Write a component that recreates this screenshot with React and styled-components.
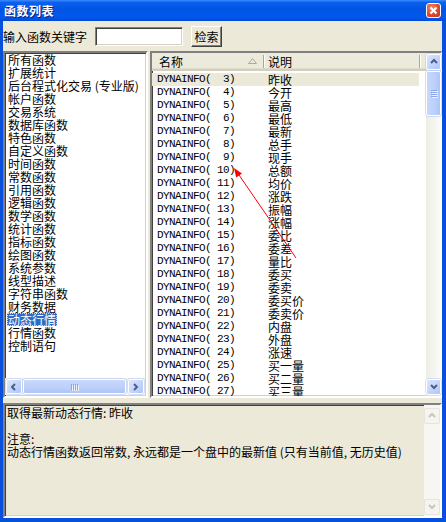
import React from 'react';
import styled, { createGlobalStyle } from 'styled-components';

const GlobalStyle = createGlobalStyle`
  html, body { margin: 0; padding: 0; background: #0055e5; }
  body {
    font-family: "Noto Sans CJK SC", "Liberation Sans", sans-serif;
    font-size: 12px;
    color: #000;
  }
`;

const Window = styled.div`
  position: relative;
  width: 446px;
  height: 522px;
  background: #0850dc;
  display: flex;
  flex-direction: column;
  overflow: hidden;
`;

const TitleBar = styled.div`
  height: 21px;
  flex: none;
  display: flex;
  align-items: center;
  padding: 0 5px 0 4px;
  background: linear-gradient(#3b8cf8 0, #0a5ff0 12%, #0055e5 45%, #0058ea 85%, #0048d4 100%);
`;

const Title = styled.span`
  color: #fff;
  font-weight: bold;
  font-size: 12px;
  letter-spacing: 0.5px;
  text-shadow: 1px 1px #0a1e8a;
`;

const CloseButton = styled.div`
  margin-left: auto;
  width: 15px;
  height: 15px;
  box-sizing: border-box;
  border: 1px solid #fff;
  border-radius: 3px;
  background: radial-gradient(circle at 35% 30%, #f08a6a, #d9452a 60%, #c23a1e);
  display: flex;
  align-items: center;
  justify-content: center;
`;

const Client = styled.div`
  flex: 1;
  margin: 0 4px 4px 3px;
  background: #ece9d8;
  display: flex;
  flex-direction: column;
`;

const SearchRow = styled.div`
  height: 30px;
  flex: none;
  display: flex;
  align-items: center;
  gap: 8px;
`;

const Label = styled.span`
  line-height: 13px;
  white-space: nowrap;
`;

const SearchInput = styled.input`
  width: 88px;
  height: 19px;
  box-sizing: border-box;
  margin: 1px 0 0;
  padding: 0 2px;
  background: #fff;
  border: 1px solid;
  border-color: #808080 #fff #fff #808080;
  box-shadow: inset 1px 1px #404040, inset -1px -1px #d4d0c8;
  outline: none;
`;

const Button = styled.button`
  width: 31px;
  height: 21px;
  padding: 0;
  font: inherit;
  font-size: 12px;
  line-height: 13px;
  background: #ece9d8;
  border: 1px solid;
  border-color: #fff #404040 #404040 #fff;
  box-shadow: inset -1px -1px #808080;
`;

const Main = styled.div`
  height: 347px;
  flex: none;
  display: flex;
  gap: 2px;
`;

const Sunken = styled.div`
  box-sizing: border-box;
  border: 2px solid;
  border-color: #808080 #fff #fff #808080;
  box-shadow: inset 1px 1px #404040, inset -1px -1px #d4d0c8;
`;

const LeftList = styled(Sunken)`
  width: 145px;
  flex: none;
  background: #fff;
  display: flex;
  flex-direction: column;
  padding: 0 1px 1px 0;
`;

const Items = styled.div`
  flex: 1;
  display: flex;
  flex-direction: column;
  align-items: flex-start;
  padding-left: 2px;
  overflow: hidden;
`;

const Item = styled.div`
  height: 13px;
  line-height: 13px;
  padding: 0 1px;
  white-space: pre;
  background: ${p => (p.$selected ? '#316ac5' : 'transparent')};
  color: ${p => (p.$selected ? '#fff' : '#000')};
  outline: ${p => (p.$selected ? '1px dotted #e8d890' : 'none')};
  outline-offset: -1px;
`;

const HScroll = styled.div`
  height: 16px;
  flex: none;
  display: flex;
  align-items: stretch;
  gap: 1px;
  padding: 1px 1px 0;
  background: linear-gradient(#eeede5, #fbfbf8);
`;

const VScroll = styled.div`
  width: ${p => p.$w || 15}px;
  flex: none;
  display: flex;
  flex-direction: column;
  gap: 1px;
  padding: ${p => p.$pad || '1px 0'};
  box-sizing: border-box;
  background: ${p => (p.$disabled ? '#f7f6f2' : 'linear-gradient(90deg, #eeede5, #fbfbf8)')};
`;

const ScrollBtn = styled.div`
  flex: none;
  width: ${p => p.$w}px;
  height: ${p => p.$h}px;
  box-sizing: border-box;
  border-radius: 2px;
  border: 1px solid ${p => (p.$disabled ? '#e6e4dc' : '#fff')};
  background: ${p =>
    p.$disabled
      ? '#f5f4ef'
      : 'linear-gradient(135deg, #dbe6fe 0%, #c3d4fc 55%, #afc5f6 100%)'};
  box-shadow: ${p => (p.$disabled ? 'none' : '0 0 0 0.5px #b2c6f3')};
  display: flex;
  align-items: center;
  justify-content: center;
`;

const Thumb = styled.div`
  flex: none;
  width: ${p => p.$w}px;
  height: ${p => p.$h}px;
  box-sizing: border-box;
  border-radius: 2px;
  border: 1px solid #fff;
  box-shadow: 0 0 0 0.5px #a9bff0;
  background: ${p =>
    p.$vertical
      ? 'linear-gradient(90deg, #c9d8fc, #bcd0fb 60%, #aec4f5)'
      : 'linear-gradient(#c9d8fc, #bcd0fb 60%, #aec4f5)'};
  display: flex;
  align-items: center;
  justify-content: center;
`;

const Grip = styled.div`
  display: flex;
  flex-direction: ${p => (p.$vertical ? 'column' : 'row')};
  gap: 1px;
`;

const GripLine = styled.div`
  width: ${p => (p.$vertical ? '6px' : '1px')};
  height: ${p => (p.$vertical ? '1px' : '6px')};
  background: #8aa5e8;
  box-shadow: 1px 1px #eef3fe;
`;

const RightList = styled(Sunken)`
  flex: 1;
  background: #fff;
  display: flex;
  border-right-width: 1px;
`;

const ListBody = styled.div`
  flex: 1;
  display: flex;
  flex-direction: column;
  overflow: hidden;
`;

const Header = styled.div`
  height: 18px;
  flex: none;
  display: flex;
  align-items: center;
  box-sizing: border-box;
  background: #ebeadb;
  border-bottom: 2px solid #d2cfbf;
  box-shadow: inset 0 -1px #dedbcb;
`;

const HeaderCell = styled.div`
  width: ${p => p.$w}px;
  flex: none;
  box-sizing: border-box;
  padding: 0 6px 0 ${p => p.$pl}px;
  display: flex;
  align-items: center;
  justify-content: space-between;
  line-height: 13px;
`;

const Divider = styled.div`
  width: 1px;
  height: 13px;
  flex: none;
  background: #aca899;
  border-right: 1px solid #fff;
`;

const Rows = styled.div`
  flex: 1;
  padding-top: 2px;
  overflow: hidden;
`;

const Row = styled.div`
  width: 267px;
  height: 13px;
  display: flex;
  line-height: 13px;
  background: ${p => (p.$selected ? '#ece9d8' : 'transparent')};
`;

const NameCell = styled.div`
  width: 112px;
  flex: none;
  box-sizing: border-box;
  padding-left: 5px;
  font-family: "Liberation Mono", monospace;
  font-size: 11px;
  letter-spacing: -0.6px;
  white-space: pre;
`;

const DescCell = styled.div`
  flex: 1;
  padding-left: 4px;
  white-space: nowrap;
`;

const Info = styled(Sunken)`
  flex: 1;
  margin-top: 5px;
  display: flex;
  background: #ece9d8;
`;

const InfoText = styled.div`
  flex: 1;
  padding: 1px 2px;
  line-height: 13px;
  white-space: pre-wrap;
`;

const Spacer = styled.div`
  flex: 1;
`;

const Overlay = styled.svg`
  position: absolute;
  left: 0;
  top: 0;
  pointer-events: none;
`;

const arrowPoints = {
  up: '1,5 4,2 7,5',
  down: '1,2 4,5 7,2',
  left: '5,1 2,4 5,7',
  right: '2,1 5,4 2,7',
};

const Arrow = ({ dir, disabled }) => (
  <svg width="8" height="8" viewBox="0 0 8 8">
    <polyline
      points={arrowPoints[dir]}
      fill="none"
      stroke={disabled ? '#c9c7ba' : '#4d6185'}
      strokeWidth="2"
    />
  </svg>
);

const GripMarks = ({ vertical }) => (
  <Grip $vertical={vertical}>
    {[0, 1, 2, 3].map(i => (
      <GripLine key={i} $vertical={vertical} />
    ))}
  </Grip>
);

const categories = [
  '所有函数', '扩展统计', '后台程式化交易 (专业版)', '帐户函数', '交易系统',
  '数据库函数', '特色函数', '自定义函数', '时间函数', '常数函数', '引用函数',
  '逻辑函数', '数学函数', '统计函数', '指标函数', '绘图函数', '系统参数',
  '线型描述', '字符串函数', '财务数据', '动态行情', '行情函数', '控制语句',
];

const descs = [
  '昨收', '今开', '最高', '最低', '最新', '总手', '现手', '总额', '均价',
  '涨跌', '振幅', '涨幅', '委比', '委差', '量比', '委买', '委卖', '委买价',
  '委卖价', '内盘', '外盘', '涨速', '买一量', '买二量', '买三量', '买一价',
];

const rows = descs.map((d, i) => ({
  name: `DYNAINFO(${String(i + 3).padStart(3, ' ')})`,
  desc: d,
}));

export default function App() {
  return (
    <>
      <GlobalStyle />
      <Window>
        <TitleBar>
          <Title>函数列表</Title>
          <CloseButton>
            <svg width="9" height="9" viewBox="0 0 9 9">
              <path d="M1.5 1.5 L7.5 7.5 M7.5 1.5 L1.5 7.5" stroke="#fff" strokeWidth="2" />
            </svg>
          </CloseButton>
        </TitleBar>
        <Client>
          <SearchRow>
            <Label>输入函数关键字</Label>
            <SearchInput />
            <Button>检索</Button>
          </SearchRow>
          <Main>
            <LeftList>
              <Items>
                {categories.map(c => (
                  <Item key={c} $selected={c === '动态行情'}>{c}</Item>
                ))}
              </Items>
              <HScroll>
                <ScrollBtn $w={16} $h={15}><Arrow dir="left" /></ScrollBtn>
                <Thumb $w={103} $h={15}><GripMarks /></Thumb>
                <Spacer />
                <ScrollBtn $w={16} $h={15}><Arrow dir="right" /></ScrollBtn>
              </HScroll>
            </LeftList>
            <RightList>
              <ListBody>
                <Header>
                  <HeaderCell $w={111} $pl={7}>
                    <span>名称</span>
                    <svg width="9" height="6" viewBox="0 0 9 6">
                      <polygon points="0.5,5.5 4.5,0.5 8.5,5.5" fill="none" stroke="#aca899" />
                    </svg>
                  </HeaderCell>
                  <Divider />
                  <HeaderCell $w={154} $pl={3}>
                    <span>说明</span>
                  </HeaderCell>
                  <Divider />
                </Header>
                <Rows>
                  {rows.map((r, i) => (
                    <Row key={r.name} $selected={i === 0}>
                      <NameCell>{r.name}</NameCell>
                      <DescCell>{r.desc}</DescCell>
                    </Row>
                  ))}
                </Rows>
              </ListBody>
              <VScroll $w={15}>
                <ScrollBtn $w={15} $h={16}><Arrow dir="up" /></ScrollBtn>
                <Thumb $vertical $w={15} $h={45}><GripMarks vertical /></Thumb>
                <Spacer />
                <ScrollBtn $w={15} $h={16}><Arrow dir="down" /></ScrollBtn>
              </VScroll>
            </RightList>
          </Main>
          <Info>
            <InfoText>
              {'取得最新动态行情: 昨收\n\n注意:\n动态行情函数返回常数, 永远都是一个盘中的最新值 (只有当前值, 无历史值)'}
            </InfoText>
            <VScroll $w={16} $pad="3px 0 1px" $disabled>
              <ScrollBtn $w={16} $h={16} $disabled><Arrow dir="up" disabled /></ScrollBtn>
              <Spacer />
              <ScrollBtn $w={16} $h={16} $disabled><Arrow dir="down" disabled /></ScrollBtn>
            </VScroll>
          </Info>
        </Client>
        <Overlay width="446" height="522" viewBox="0 0 446 522">
          <line x1="296" y1="258" x2="239" y2="175" stroke="#ff0000" strokeWidth="1" />
          <polygon points="234,168 242,173.4 236.2,177.4" fill="#ff0000" />
        </Overlay>
      </Window>
    </>
  );
}
